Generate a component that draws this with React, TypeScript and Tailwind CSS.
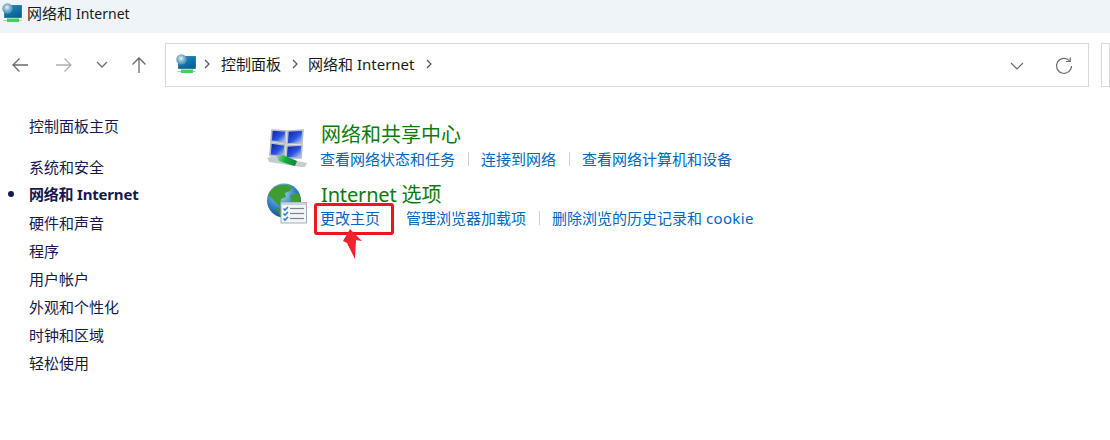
import React from "react";

const font = { fontFamily: '"Noto Sans", "Noto Sans CJK SC", sans-serif' };

function NetIcon({ size = 20 }: { size?: number }) {
  return (
    <svg width={size} height={size} viewBox="0 0 20 20" className="shrink-0">
      <defs>
        <linearGradient id="scr" x1="0" y1="0" x2="0.6" y2="1">
          <stop offset="0" stopColor="#1c8fc7" />
          <stop offset="1" stopColor="#0a5f95" />
        </linearGradient>
        <radialGradient id="gl" cx="0.45" cy="0.4" r="0.7">
          <stop offset="0" stopColor="#e8f2f7" />
          <stop offset="0.45" stopColor="#7fb3cf" />
          <stop offset="1" stopColor="#2f7fa8" />
        </radialGradient>
      </defs>
      <rect x="2.5" y="2.5" width="17" height="12" fill="url(#scr)" stroke="#1e6f93" strokeWidth="0.8" />
      <circle cx="5.5" cy="5.5" r="5.2" fill="url(#gl)" />
      <rect x="1.5" y="17" width="18" height="1" fill="#b5bec2" />
      <rect x="5" y="15.5" width="12" height="3.5" fill="#3fd35c" />
    </svg>
  );
}

function NetworkCenterIcon() {
  return (
    <svg width="40" height="40" viewBox="0 0 40 40" className="mt-[6px] ml-px">
      <defs>
        <linearGradient id="pane" x1="0" y1="0" x2="1" y2="1">
          <stop offset="0" stopColor="#08189e" />
          <stop offset="0.55" stopColor="#2a55e0" />
          <stop offset="1" stopColor="#d8e6fa" />
        </linearGradient>
        <linearGradient id="pipe" x1="0" y1="0" x2="1" y2="0.2">
          <stop offset="0" stopColor="#7fdc8e" />
          <stop offset="0.5" stopColor="#0fae3c" />
          <stop offset="1" stopColor="#148a3a" />
        </linearGradient>
      </defs>
      <g stroke="#b4bbc1" strokeWidth="1.6">
        <polygon points="5,2 19,3 18,15 4,13" fill="url(#pane)" />
        <polygon points="21,3 36,2 35,15 20,16" fill="url(#pane)" />
        <polygon points="4,15 18,17 17,29 3,27" fill="url(#pane)" />
        <polygon points="20,18 35,17 34,30 19,30" fill="url(#pane)" />
      </g>
      <polygon points="0,30 5,28 40,35 38,39 34,39 2,34" fill="#c6cdd1" />
      <polygon points="10,29 16,27 30,33 28,38 24,37 12,33" fill="url(#pipe)" />
    </svg>
  );
}

function GlobeIcon() {
  return (
    <svg width="42" height="42" viewBox="0 0 42 42" className="mt-[1px]">
      <defs>
        <radialGradient id="ocean" cx="0.4" cy="0.3" r="0.8">
          <stop offset="0" stopColor="#b5dcf2" />
          <stop offset="0.55" stopColor="#2f7fc4" />
          <stop offset="1" stopColor="#0f3b78" />
        </radialGradient>
      </defs>
      <circle cx="18" cy="17.5" r="17" fill="url(#ocean)" />
      <path d="M9 4 C14 1 22 1 26 4 L24 8 L19 10 L20 14 L15 16 L14 23 L10 20 L5 14 L2 13 C3 9 6 6 9 4Z" fill="#3f9d2f" />
      <path d="M24 12 L33 10 L35 18 L30 21 L26 20Z" fill="#3f9d2f" />
      <path d="M10 25 L16 26 L17 33 L13 32Z" fill="#3b8f2f" />
      <rect x="15" y="19.5" width="25.5" height="20.5" fill="#f3f6f9" stroke="#a3adb5" />
      <rect x="15" y="19.5" width="25.5" height="2.5" fill="#c9d2da" />
      <g stroke="#2f86c9" strokeWidth="1.7" fill="none">
        <path d="M17.5 25.5 l1.5 1.5 l3 -3" />
        <path d="M17.5 30.5 l1.5 1.5 l3 -3" />
        <path d="M17.5 35.5 l1.5 1.5 l3 -3" />
      </g>
      <g stroke="#7a838e" strokeWidth="1.2">
        <path d="M24 25.5 H38" />
        <path d="M24 30.5 H38" />
        <path d="M24 35.5 H38" />
      </g>
    </svg>
  );
}

function Chevron() {
  return (
    <svg width="8" height="10" viewBox="0 0 8 10" className="shrink-0">
      <path d="M2 1 L6 5 L2 9" fill="none" stroke="#555" strokeWidth="1.2" />
    </svg>
  );
}

function NavButtons() {
  return (
    <div className="flex items-center">
      <svg width="18" height="18" viewBox="0 0 18 18" className="ml-[11px]">
        <path d="M17 9 H2 M8.5 2.5 L2 9 L8.5 15.5" fill="none" stroke="#6b6b6b" strokeWidth="1.3" />
      </svg>
      <svg width="18" height="18" viewBox="0 0 18 18" className="ml-[26px]">
        <path d="M1 9 H16 M9.5 2.5 L16 9 L9.5 15.5" fill="none" stroke="#aeaeae" strokeWidth="1.3" />
      </svg>
      <svg width="12" height="8" viewBox="0 0 12 8" className="ml-[23px]">
        <path d="M1 1 L6 6 L11 1" fill="none" stroke="#6b6b6b" strokeWidth="1.3" />
      </svg>
      <svg width="18" height="18" viewBox="0 0 18 18" className="ml-[22px]">
        <path d="M9 17 V2 M2.5 8.5 L9 2 L15.5 8.5" fill="none" stroke="#6b6b6b" strokeWidth="1.3" />
      </svg>
    </div>
  );
}

function AddressBar() {
  return (
    <div className="flex h-[44px] items-center border border-[#d9d9d9] pb-[2px] ml-[17px] w-[924px] text-[15px] text-[#1a1a1a]">
      <span className="ml-[10px]"><NetIcon /></span>
      <span className="ml-[7px]"><Chevron /></span>
      <span className="ml-[10px]">控制面板</span>
      <span className="ml-[10px]"><Chevron /></span>
      <span className="ml-[9px]">网络和 Internet</span>
      <span className="ml-[10px]"><Chevron /></span>
      <svg width="14" height="8" viewBox="0 0 14 8" className="ml-auto mt-[3px]">
        <path d="M1 1 L7 7 L13 1" fill="none" stroke="#6b6b6b" strokeWidth="1.2" />
      </svg>
      <svg width="18" height="18" viewBox="0 0 18 18" className="ml-[31px] mr-[15px] mt-[3px]">
        <path d="M14.5 3.7 A7.5 7.5 0 1 0 16.5 9" fill="none" stroke="#6b6b6b" strokeWidth="1.2" />
        <path d="M11 4.5 H15.2 V0.5" fill="none" stroke="#6b6b6b" strokeWidth="1.2" />
      </svg>
    </div>
  );
}

const sideItems = ["系统和安全", "网络和 Internet", "硬件和声音", "程序", "用户帐户", "外观和个性化", "时钟和区域", "轻松使用"];

function Sidebar() {
  return (
    <nav className="w-[237px] pt-[25px] pl-[29px] text-[15px] leading-[28px] text-[#16194d] shrink-0">
      <div>控制面板主页</div>
      <div className="mt-[13px]">
        {sideItems.map((t, i) => (
          <div key={t} className={i === 1 ? "relative -mt-px mb-px font-bold tracking-[-0.2px]" : ""}>
            {i === 1 && <span className="absolute left-[-21px] top-[11px] h-[6px] w-[6px] rounded-full bg-[#16194d]" />}
            {t}
          </div>
        ))}
      </div>
    </nav>
  );
}

function Sep() {
  return <span className="ml-[13px] mr-[12px] h-[14px] w-px bg-[#cfcfcf]" />;
}

function Section({ icon, title, linkClass, children }: { icon: React.ReactNode; title: React.ReactNode; linkClass: string; children: React.ReactNode }) {
  return (
    <section className="flex">
      <div className="w-[54px] shrink-0">{icon}</div>
      <div>
        <h2 className="ml-px text-[20px] leading-[26px] text-[#0d7a0d] whitespace-nowrap">{title}</h2>
        <div className={linkClass}>{children}</div>
      </div>
    </section>
  );
}

export default function App() {
  return (
    <div className="h-[440px] w-[1110px] overflow-hidden bg-white" style={font}>
      <header className="flex h-[33px] items-center bg-[#eff4f9] pl-[2px] pb-[6px] text-[15px] text-[#1a1a1a]">
        <span className="-mt-[1px]"><NetIcon /></span>
        <span className="ml-[5px]">
          网络和 <span className="text-[14px]">Internet</span>
        </span>
      </header>
      <div className="flex items-center pt-[10px]">
        <NavButtons />
        <AddressBar />
        <div className="ml-[12px] h-[44px] flex-1 border border-[#d9d9d9]" />
      </div>
      <main className="flex">
        <Sidebar />
        <div className="pl-[29px] pt-[35px] flex flex-col gap-[12px]">
          <Section
            icon={<NetworkCenterIcon />}
            title="网络和共享中心"
            linkClass="flex items-center text-[15px] leading-[22px] text-[#0067c0] whitespace-nowrap"
          >
            <span>查看网络状态和任务</span>
            <Sep />
            <span>连接到网络</span>
            <Sep />
            <span>查看网络计算机和设备</span>
          </Section>
          <Section
            icon={<GlobeIcon />}
            title={<span className="tracking-[-0.15px]">Internet 选项</span>}
            linkClass="-mt-px flex items-center text-[15px] leading-[22px] text-[#0067c0] whitespace-nowrap"
          >
            <span className="relative">
              更改主页
              <span className="absolute left-[-6px] top-[-4px] h-[32px] w-[80px] rounded-[3px] border-[3px] border-[#f0141e]" />
              <svg width="21" height="31" viewBox="0 0 21 31" className="absolute left-[22px] top-[22px]">
                <polygon points="8,0 20,12 14,11 13,30 5,14 1,12" fill="#f5222d" />
              </svg>
            </span>
            <span className="w-[26px]" />
            <span>管理浏览器加载项</span>
            <Sep />
            <span>
              删除浏览的历史记录和 <span className="tracking-[0.35px]">cookie</span>
            </span>
          </Section>
        </div>
      </main>
    </div>
  );
}
